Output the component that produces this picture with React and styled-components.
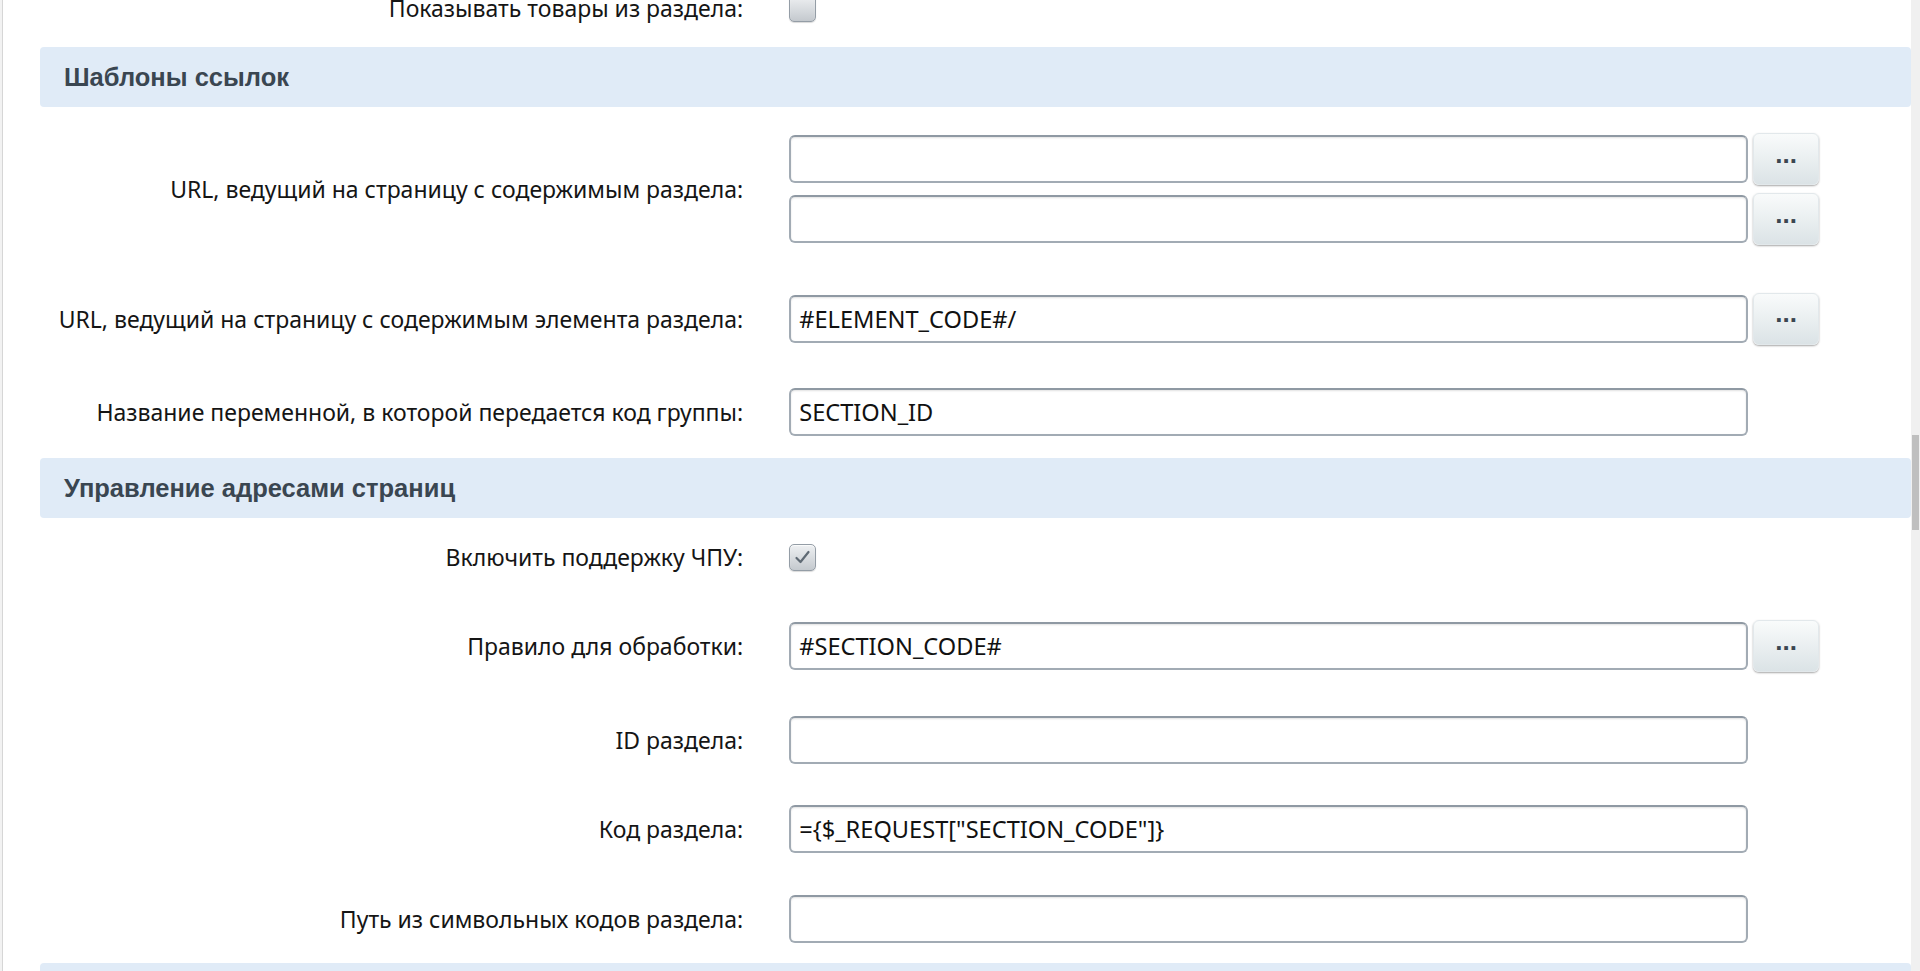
import styled, { createGlobalStyle } from "styled-components";

const GlobalStyle = createGlobalStyle`
  body {
    margin: 0;
    background: #f2f2f2;
    overflow: hidden;
    font-family: "Noto Sans", "Open Sans", sans-serif;
  }
`;

export default function App() {
  return (
    <>
      <GlobalStyle />
      <Page>
        <Main>
          <Content>
            <Row $h={78}>
              <Label>Показывать товары из раздела:</Label>
              <Field>
                <Checkbox />
              </Field>
            </Row>

            <SectionTitle>Шаблоны ссылок</SectionTitle>

            <Row $h={164}>
              <Label>URL, ведущий на страницу с содержимым раздела:</Label>
              <Field>
                <Stack>
                  <Line>
                    <Input defaultValue="" />
                    <DotsButton>...</DotsButton>
                  </Line>
                  <Line>
                    <Input defaultValue="" />
                    <DotsButton>...</DotsButton>
                  </Line>
                </Stack>
              </Field>
            </Row>
            <Row $h={95}>
              <Label>URL, ведущий на страницу с содержимым элемента раздела:</Label>
              <Field>
                <Line>
                  <Input defaultValue="#ELEMENT_CODE#/" />
                  <DotsButton>...</DotsButton>
                </Line>
              </Field>
            </Row>
            <Row $h={92}>
              <Label>Название переменной, в которой передается код группы:</Label>
              <Field>
                <Input defaultValue="SECTION_ID" />
              </Field>
            </Row>

            <SectionTitle>Управление адресами страниц</SectionTitle>

            <Row $h={78}>
              <Label>Включить поддержку ЧПУ:</Label>
              <Field>
                <Checkbox checked />
              </Field>
            </Row>
            <Row $h={100}>
              <Label>Правило для обработки:</Label>
              <Field>
                <Line>
                  <Input defaultValue="#SECTION_CODE#" />
                  <DotsButton>...</DotsButton>
                </Line>
              </Field>
            </Row>
            <Row $h={88}>
              <Label>ID раздела:</Label>
              <Field>
                <Input defaultValue="" />
              </Field>
            </Row>
            <Row $h={90}>
              <Label>Код раздела:</Label>
              <Field>
                <Input defaultValue={'={$_REQUEST["SECTION_CODE"]}'} />
              </Field>
            </Row>
            <Row $h={89}>
              <Label>Путь из символьных кодов раздела:</Label>
              <Field>
                <Input defaultValue="" />
              </Field>
            </Row>

            <SectionTitle />
          </Content>
        </Main>
        <ScrollTrack>
          <ScrollThumb />
        </ScrollTrack>
      </Page>
    </>
  );
}

function Checkbox({ checked }) {
  return (
    <Box>
      {checked && (
        <svg width="21" height="21" viewBox="0 0 21 21">
          <path d="M4.5 11 L8.5 15 L16.5 5" fill="none" stroke="#5f6a74" strokeWidth="2.2" strokeLinecap="round" strokeLinejoin="round" />
        </svg>
      )}
    </Box>
  );
}

const Page = styled.div`
  display: flex;
  height: 971px;
  overflow: hidden;
`;

const Main = styled.main`
  flex: 1;
  margin-left: 2px;
  border-left: 1px solid #d6d6d6;
  background: #fff;
  overflow: hidden;
`;

const Content = styled.div`
  margin-top: -31px;
`;

const SectionTitle = styled.h2`
  margin: 0 0 0 37px;
  height: 60px;
  display: flex;
  align-items: center;
  padding-left: 24px;
  border-radius: 4px;
  background: #e0ebf7;
  font-family: "Liberation Sans", Arial, sans-serif;
  font-size: 25.5px;
  font-weight: 700;
  color: #3a4651;
`;

const Row = styled.div`
  display: grid;
  grid-template-columns: 40% 60%;
  align-items: center;
  min-height: ${(p) => p.$h}px;
`;

const Label = styled.div`
  text-align: right;
  padding-right: 23px;
  font-size: 23px;
  color: #151515;
  white-space: nowrap;
`;

const Field = styled.div`
  padding-left: 23px;
  display: flex;
  align-items: center;
`;

const Stack = styled.div`
  display: flex;
  flex-direction: column;
  gap: 8px;
`;

const Line = styled.div`
  display: flex;
  align-items: center;
  gap: 5px;
`;

const Input = styled.input`
  box-sizing: border-box;
  width: 959px;
  height: 48px;
  padding: 0 8px;
  border: 2px solid #a2abb4;
  border-top-color: #8f99a3;
  border-radius: 6px;
  background: #fff;
  box-shadow: inset 0 1px 2px rgba(0, 0, 0, 0.12);
  font-family: "Noto Sans", "Open Sans", sans-serif;
  font-size: 23.6px;
  color: #111;
  outline: none;
`;

const DotsButton = styled.button`
  box-sizing: border-box;
  width: 66px;
  height: 52px;
  border: 1px solid #e2e8eb;
  border-radius: 6px;
  background: linear-gradient(#f9fbfb, #dbe3e6);
  box-shadow: 0 1px 2px rgba(0, 0, 0, 0.35);
  font-family: "Liberation Sans", Arial, sans-serif;
  font-size: 26px;
  font-weight: 700;
  color: #3b4650;
  padding: 0 0 10px;
`;

const Box = styled.span`
  box-sizing: border-box;
  width: 27px;
  height: 27px;
  display: flex;
  align-items: center;
  justify-content: center;
  border: 1px solid #949da6;
  border-radius: 5px;
  background: linear-gradient(#eef0f2, #c4c9ce);
  box-shadow: inset 0 1px 1px rgba(255, 255, 255, 0.8), 0 1px 1px rgba(0, 0, 0, 0.15);
`;

const ScrollTrack = styled.div`
  width: 9px;
  background: #f0f0f0;
  padding-top: 435px;
`;

const ScrollThumb = styled.div`
  margin-left: 1px;
  width: 7px;
  height: 95px;
  background: #bfbfbf;
`;
